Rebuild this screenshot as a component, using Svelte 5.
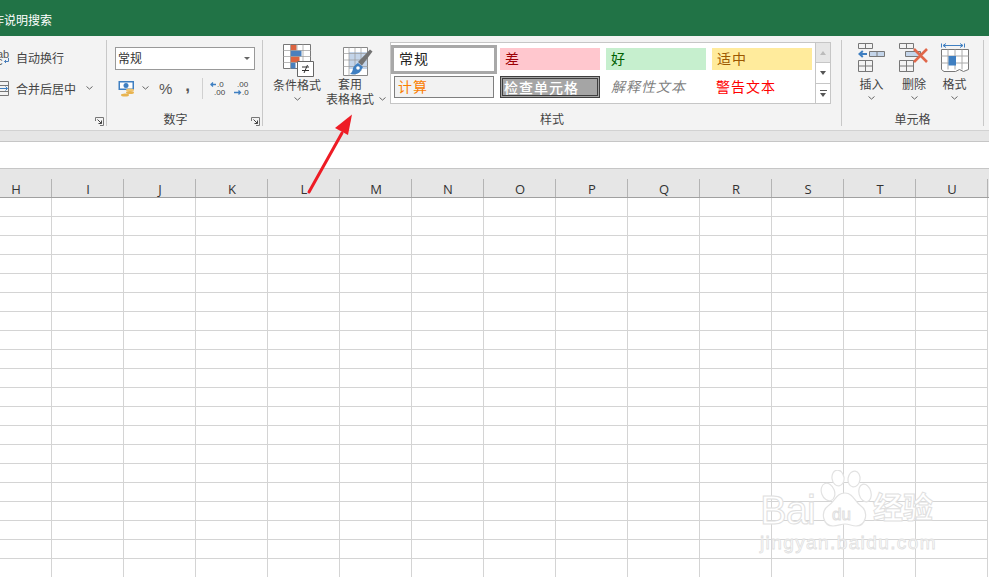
<script>
	const cols = ['H', 'I', 'J', 'K', 'L', 'M', 'N', 'O', 'P', 'Q', 'R', 'S', 'T', 'U'];
	const rows = Array.from({ length: 20 }, (_, i) => i);
</script>

{#snippet chevron()}
	<svg class="chev" width="7" height="4" viewBox="0 0 7 4"><path d="M.5.5l3 2.6 3-2.6" fill="none" stroke="#666" /></svg>
{/snippet}

{#snippet launcher()}
	<svg class="launcher" width="9" height="9" viewBox="0 0 9 9">
		<path d="M.5 4V.5h8v8H5" fill="none" stroke="#777" />
		<path d="M2.5 2.5l4 4M6.5 3.5v3h-3" fill="none" stroke="#444" />
	</svg>
{/snippet}

<div class="page">
	<div class="title-bar"><span>作说明搜索</span></div>

	<div class="ribbon">
		<section class="group align">
			<div class="group-body">
				<div class="wrap-row">
					<svg class="crop-icon" width="14" height="17" viewBox="0 0 14 17">
						<text x="0" y="9" class="ab">ab</text>
						<text x="0" y="16" class="ab">c</text>
						<path d="M11.5 9v3.5H7.5M9 11l-1.5 1.5L9 14" fill="none" stroke="#4a7ebb" />
					</svg>
					<span>自动换行</span>
				</div>
				<div class="wrap-row merge">
					<svg class="crop-icon" width="14" height="17" viewBox="0 0 14 17">
						<path d="M.5 1.5h11v14H.5zM.5 5.5h11M.5 11.5h11" fill="none" stroke="#777" />
						<path d="M.5 8.5h10M8.5 6.5l2 2-2 2" fill="none" stroke="#3f7fc1" />
					</svg>
					<span>合并后居中</span>
					{@render chevron()}
				</div>
			</div>
			<footer class="group-label">{@render launcher()}</footer>
		</section>

		<section class="group number">
			<div class="group-body">
				<div class="format-select">
					<span>常规</span>
					<i class="caret"></i>
				</div>
				<div class="number-tools">
					<svg width="17" height="17" viewBox="0 0 17 17">
						<path d="M.5 1h15.500v9H.5z" fill="#3f7fc1" />
						<path d="M2 2.500h12.500v6H2z" fill="#fff" />
						<circle cx="8" cy="5.500" r="2.500" fill="#3f7fc1" />
						<ellipse cx="12" cy="10" rx="4" ry="1.500" fill="#f0c36d" />
						<ellipse cx="12" cy="12.500" rx="4" ry="1.500" fill="#e8b450" />
						<ellipse cx="7" cy="15" rx="4" ry="1.500" fill="#e8b450" />
					</svg>
					<span class="chev-slot">{@render chevron()}</span>
					<span class="percent">%</span>
					<span class="comma">,</span>
					<i class="tool-sep"></i>
					<svg class="dec" width="16" height="16" viewBox="0 0 16 16">
						<text x="7" y="7">.0</text>
						<text x="4" y="15">.00</text>
						<path d="M6 4.500H.5M3 2.500l-2 2 2 2" fill="none" stroke="#3f7fc1" stroke-width="1.300" />
					</svg>
					<svg class="dec" width="16" height="16" viewBox="0 0 16 16">
						<text x="3" y="7">.00</text>
						<text x="8" y="15">.0</text>
						<path d="M0 12.500h6.500M4.500 10.500l2 2-2 2" fill="none" stroke="#3f7fc1" stroke-width="1.300" />
					</svg>
				</div>
			</div>
			<footer class="group-label"><span>数字</span>{@render launcher()}</footer>
		</section>

		<section class="group styles">
			<div class="group-body styles-body">
				<button class="big cond">
					<svg class="tool-icon" width="31" height="33" viewBox="0 0 31 33">
						<path d="M.5.500h27v24h-27z" fill="#fff" stroke="#777" />
						<path d="M7.500 1h6v5.500h-6z" fill="#dd6440" />
						<path d="M7.500 6.500h11v6h-11z" fill="#4a80bd" />
						<path d="M7.500 12.500h9v6h-9z" fill="#dd6440" />
						<path d="M7.500 18.500h5v6h-5z" fill="#4a80bd" />
						<path d="M7.500 0v25M14 0v6M20 0v18M0 6.500h28M0 12.500h28M0 18.500h14" fill="none" stroke="#999" stroke-width=".7" />
						<path d="M14.500 17.500h16v15h-16z" fill="#fff" stroke="#666" />
						<path d="M19 23h7M19 26.500h7M24.500 21l-3.500 8" fill="none" stroke="#333" />
					</svg>
					<span class="big-text">条件格式</span>
					{@render chevron()}
				</button>
				<button class="big table-format">
					<svg class="tool-icon" width="31" height="29" viewBox="0 0 31 29">
						<path d="M.5.500h24v28h-24z" fill="#fff" stroke="#888" />
						<path d="M6 5h18v17H6z" fill="#c4d5ea" />
						<path d="M6 0v29M12 0v29M18 0v24M0 6.500h25M0 13h25M0 19.500h25" fill="none" stroke="#999" stroke-width=".7" />
						<path d="M29.500 4.500L27 2.500 15 15l4 3.500z" fill="#737373" />
						<path d="M15 16l5 4-3 5c-2 2-6 3-10 2 2-1.500 3-4 3-6 1-2 3-4 5-5z" fill="#3f7fc1" />
						<circle cx="15" cy="21" r="1.800" fill="#fff" />
					</svg>
					<span class="big-text">套用</span>
					<span class="big-text second">表格格式{@render chevron()}</span>
				</button>
				<div class="gallery">
					<div class="cells">
						<span class="cell normal">常规</span>
						<span class="cell bad">差</span>
						<span class="cell good">好</span>
						<span class="cell neutral">适中</span>
						<span class="cell calc">计算</span>
						<span class="cell check">检查单元格</span>
						<span class="cell note">解释性文本</span>
						<span class="cell warn">警告文本</span>
					</div>
					<div class="gallery-scroll">
						<span class="up"><i class="tri dim"></i></span>
						<span><i class="tri"></i></span>
						<span class="more"><b></b><i class="tri"></i></span>
					</div>
				</div>
			</div>
			<footer class="group-label"><span>样式</span></footer>
		</section>

		<section class="group cells-group">
			<div class="group-body cell-tools">
				<button class="big small">
					<svg class="tool-icon" width="27" height="29" viewBox="0 0 27 29">
						<path d="M.5.500h14v5H.5zM7.500.5v5M.5 17.500h14v11H.5zM.5 23h14M7.500 17.500v11" fill="none" stroke="#777" />
						<path d="M11.500 8.500h15v5h-15z" fill="#c4d5ea" stroke="#777" />
						<path d="M19 8.500v5" stroke="#777" />
						<path d="M9 11H2M4.800 8L1.500 11l3.300 3" fill="none" stroke="#3f7fc1" stroke-width="2" />
					</svg>
					<span class="big-text">插入</span>
					{@render chevron()}
				</button>
				<button class="big small">
					<svg class="tool-icon" width="30" height="29" viewBox="0 0 30 29">
						<path d="M.5.500h14v5H.5zM7.500.5v5M.5 17.500h14v11H.5zM.5 23h14M7.500 17.500v11" fill="none" stroke="#777" />
						<path d="M6.500 8.500h15v5h-15z" fill="#c4d5ea" stroke="#777" />
						<path d="M15 6l13 13M28 6L15 19" stroke="#e0674a" stroke-width="2.600" />
					</svg>
					<span class="big-text">删除</span>
					{@render chevron()}
				</button>
				<button class="big small">
					<svg class="tool-icon" width="28" height="29" viewBox="0 0 28 29">
						<path d="M.5.500v4M23.500.500v4M2 2.500h20M5 .5l-3 2 3 2M19 .5l3 2-3 2" fill="none" stroke="#3f7fc1" />
						<path d="M.5 6.500h27v20l-5 2-4-2-4 2H3l-2.500-2z" fill="#fff" stroke="#777" />
						<path d="M7 6.500v20M14 6.500v20M21 6.500v20M.5 13h27M.5 20h27" fill="none" stroke="#aaa" />
						<path d="M7.500 13h7.500v9.500H7.500z" fill="#3f7fc1" />
					</svg>
					<span class="big-text">格式</span>
					{@render chevron()}
				</button>
			</div>
			<footer class="group-label"><span>单元格</span></footer>
		</section>
	</div>

	<div class="band"></div>
	<div class="formula-bar"></div>

	<div class="sheet">
		<div class="col-head">
			{#each cols as col}
				<div class="col-cell"><span>{col}</span></div>
			{/each}
		</div>
		<div class="grid">
			{#each rows as row (row)}
				{#each cols as col}
					<i></i>
				{/each}
			{/each}
		</div>
	</div>

	<svg class="arrow" width="70" height="90" viewBox="0 0 70 90">
		<path d="M10 87L43 28" stroke="#ee1c25" stroke-width="3" stroke-linecap="round" fill="none" />
		<path d="M53 9.500L36 23l13 7z" fill="#ee1c25" />
	</svg>

	<div class="watermark">
		<svg class="paw" width="54" height="60" viewBox="0 0 54 60">
			<g fill="#fff" stroke="#e2e2e2" stroke-width="1.200">
				<ellipse cx="8" cy="22" rx="6.500" ry="9" transform="rotate(-20 8 22)" />
				<ellipse cx="18" cy="8" rx="6" ry="8" transform="rotate(-8 18 8)" />
				<ellipse cx="34" cy="9" rx="6" ry="8" transform="rotate(8 34 9)" />
				<ellipse cx="45" cy="23" rx="6" ry="9" transform="rotate(-15 45 23)" />
				<path d="M25 23c8 0 10 9 16 13 8 6 5 20-5 20-4 0-7-2-11-2s-7 2-12 2C3 56 0 42 8 36c7-4 8-13 17-13z" />
			</g>
		</svg>
		<span class="wm-bai">Bai</span>
		<span class="wm-du">du</span>
		<span class="wm-cn">经验</span>
		<span class="wm-url">jingyan.baidu.com</span>
	</div>
</div>

<style>
	:global(body) {
		margin: 0;
		overflow: hidden;
	}

	.page {
		position: relative;
		width: 989px;
		height: 577px;
		overflow: hidden;
		background: #fff;
		color: #444;
		font-family: 'Noto Sans CJK SC', 'Liberation Sans', sans-serif;
		font-size: 12px;
	}

	.title-bar {
		height: 36px;
		background: #217346;
		color: #fff;
		display: flex;
		align-items: center;
		margin-left: -8px;
		padding-top: 2px;
		box-sizing: border-box;
	}

	.ribbon {
		height: 95px;
		box-sizing: border-box;
		display: flex;
		padding-top: 4px;
		background: #f3f3f3;
		border-bottom: 1px solid #d2d2d2;
	}

	.group {
		height: 86px;
		box-sizing: border-box;
		border-right: 1px solid #c8c8c8;
		display: flex;
		flex-direction: column;
	}

	.group-body {
		height: 71px;
		box-sizing: border-box;
	}

	.group-label {
		flex: 1;
		display: flex;
		align-items: center;
		justify-content: center;
		position: relative;
		line-height: 15px;
		color: #444;
	}

	.launcher {
		position: absolute;
		right: 2px;
		bottom: 0;
	}

	button {
		border: 0;
		background: none;
		padding: 0;
		color: inherit;
		font: inherit;
	}

	.align {
		width: 107px;
	}

	.wrap-row {
		display: flex;
		align-items: center;
		height: 20px;
		margin-top: 7px;
		margin-left: -3px;
		gap: 5px;
	}

	.wrap-row.merge {
		margin-top: 11px;
	}

	.wrap-row .chev {
		margin-left: 5px;
	}

	.ab {
		font-family: 'Liberation Sans', sans-serif;
		font-size: 11px;
		fill: #555;
	}

	.number {
		width: 156px;
		padding-left: 8px;
	}

	.number .group-label {
		padding-right: 26px;
	}

	.format-select {
		width: 140px;
		height: 23px;
		box-sizing: border-box;
		margin-top: 7px;
		border: 1px solid #999;
		background: #fff;
		display: flex;
		align-items: center;
		justify-content: space-between;
		padding: 0 4px 2px 2px;
		color: #333;
	}

	.caret {
		border: 3px solid transparent;
		border-top: 3px solid #666;
		border-bottom: 0;
		margin-top: 2px;
	}

	.number-tools {
		display: flex;
		align-items: center;
		height: 24px;
		margin-top: 6px;
		margin-left: 3px;
	}

	.chev-slot {
		margin-left: 7px;
		width: 7px;
		display: flex;
	}

	.percent {
		margin-left: 10px;
		font: 15px 'Liberation Sans', sans-serif;
		color: #555;
	}

	.comma {
		margin-left: 13px;
		font: bold 17px 'Liberation Sans', sans-serif;
		color: #555;
		margin-top: -5px;
	}

	.tool-sep {
		width: 1px;
		height: 21px;
		background: #d0d0d0;
		margin: 0 7px 0 12px;
	}

	.dec + .dec {
		margin-left: 8px;
	}

	.dec text {
		font: 8px 'Liberation Sans', sans-serif;
		fill: #444;
	}

	.styles {
		width: 579px;
		padding-left: 10px;
	}

	.styles .group-label {
		padding-right: 10px;
	}

	.styles-body {
		display: flex;
	}

	.big {
		display: flex;
		flex-direction: column;
		align-items: center;
		width: 48px;
		flex: none;
		line-height: 15px;
		padding-top: 3px;
		box-sizing: border-box;
		height: 64px;
	}

	.tool-icon {
		margin-bottom: 4px;
		flex: none;
	}

	.cond .tool-icon {
		margin: 1px 0 0 3px;
	}

	.big-text {
		white-space: nowrap;
		color: #444;
	}

	.big .chev {
		margin-top: 5px;
	}

	.table-format {
		margin-left: 5px;
	}

	.table-format .tool-icon {
		align-self: flex-start;
		margin: 4px 0 0 17px;
	}

	.second {
		position: relative;
		width: 48px;
	}

	.big .second .chev {
		position: absolute;
		left: 53px;
		top: 6px;
		margin: 0;
	}

	.gallery {
		margin: 2px 0 0 16px;
		width: 441px;
		height: 62px;
		box-sizing: border-box;
		display: flex;
		justify-content: space-between;
		border: 1px solid #c6c6c6;
		background: #fff;
	}

	.cells {
		display: grid;
		grid-template-columns: repeat(4, 100px);
		grid-template-rows: 22px 22px;
		gap: 6px;
		padding: 5px 0 0 3px;
	}

	.cell {
		box-sizing: border-box;
		display: flex;
		align-items: center;
		padding: 0 0 3px 5px;
		font-size: 14px;
		letter-spacing: 1px;
		line-height: 1;
	}

	.normal {
		background: #fff;
		color: #222;
		box-shadow: 0 0 0 3px #a8a8a8;
		outline: 1px solid #fff;
		outline-offset: -1px;
		margin-bottom: -1px;
	}

	.bad {
		background: #ffc7ce;
		color: #9c0006;
	}

	.good {
		background: #c6efce;
		color: #006100;
	}

	.neutral {
		background: #ffeb9c;
		color: #9c5700;
	}

	.calc {
		background: #f2f2f2;
		color: #fa7d00;
		border: 1px solid #7f7f7f;
		padding-left: 3px;
		padding-bottom: 2px;
	}

	.check {
		background: #a5a5a5;
		color: #fff;
		font-weight: 500;
		border: 3px double #3f3f3f;
		padding: 0 0 1px 1px;
	}

	.note {
		color: #7f7f7f;
		font-style: italic;
	}

	.warn {
		color: #ff0000;
		padding-left: 4px;
	}

	.gallery-scroll {
		width: 14px;
		display: flex;
		flex-direction: column;
		border-left: 1px solid #c6c6c6;
	}

	.gallery-scroll span {
		flex: 1;
		display: flex;
		flex-direction: column;
		align-items: center;
		justify-content: center;
		gap: 2px;
		border-bottom: 1px solid #c6c6c6;
	}

	.gallery-scroll span:last-child {
		border-bottom: 0;
	}

	.gallery-scroll .up {
		background: #e6e6e6;
	}

	.tri {
		border: 3px solid transparent;
		border-top: 4px solid #555;
		border-bottom: 0;
	}

	.tri.dim {
		border-top: 0;
		border-bottom: 4px solid #bbb;
	}

	.more b {
		width: 7px;
		height: 1px;
		background: #555;
	}

	.cells-group {
		width: 142px;
	}

	.cell-tools {
		display: flex;
		padding-left: 16px;
		gap: 14px;
	}

	.big.small {
		width: 27px;
	}

	.big.small:nth-child(2) {
		width: 30px;
	}

	.big.small:nth-child(3) {
		margin-left: -2px;
	}

	.band {
		height: 10px;
		background: #e6e6e6;
		border-bottom: 1px solid #c6c6c6;
	}

	.formula-bar {
		height: 26px;
		background: #fff;
		border-bottom: 1px solid #c6c6c6;
	}

	.sheet {
		margin-left: -20px;
		width: 1100px;
	}

	.col-head {
		display: flex;
		height: 29px;
		box-sizing: border-box;
		background: #e6e6e6;
		border-bottom: 1px solid #a0a0a0;
		align-items: flex-end;
	}

	.col-cell {
		width: 72px;
		height: 18px;
		box-sizing: border-box;
		border-right: 1px solid #b4b4b4;
		padding-left: 1px;
		text-align: center;
		font: 13px/20px 'Open Sans', sans-serif;
		color: #333;
	}

	.grid {
		display: grid;
		grid-template-columns: repeat(14, 72px);
		grid-auto-rows: 19px;
	}

	.grid i {
		box-sizing: border-box;
		border-right: 1px solid #d4d4d4;
		border-bottom: 1px solid #d4d4d4;
	}

	.arrow {
		position: absolute;
		left: 299px;
		top: 105px;
	}

	.watermark {
		position: absolute;
		left: 760px;
		top: 470px;
		width: 180px;
		height: 90px;
		color: #fff;
		-webkit-text-stroke: 1px #e0e0e0;
		line-height: 1;
		white-space: nowrap;
	}

	.watermark span {
		position: absolute;
	}

	.paw {
		position: absolute;
		left: 60px;
		top: 0;
	}

	.wm-bai {
		left: 0;
		top: 20px;
		font: 40px/1 'Liberation Sans', sans-serif;
		letter-spacing: -1px;
	}

	.wm-du {
		left: 72px;
		top: 36px;
		font: 17px/1 'Liberation Sans', sans-serif;
	}

	.wm-cn {
		left: 113px;
		top: 20px;
		font: 700 30px/1.2 'Noto Sans CJK SC', sans-serif;
		margin-top: -3px;
	}

	.wm-url {
		left: 0;
		top: 63px;
		font: 19px/1 'Liberation Sans', sans-serif;
		letter-spacing: 1.400px;
		-webkit-text-stroke: .8px #e0e0e0;
	}
</style>
